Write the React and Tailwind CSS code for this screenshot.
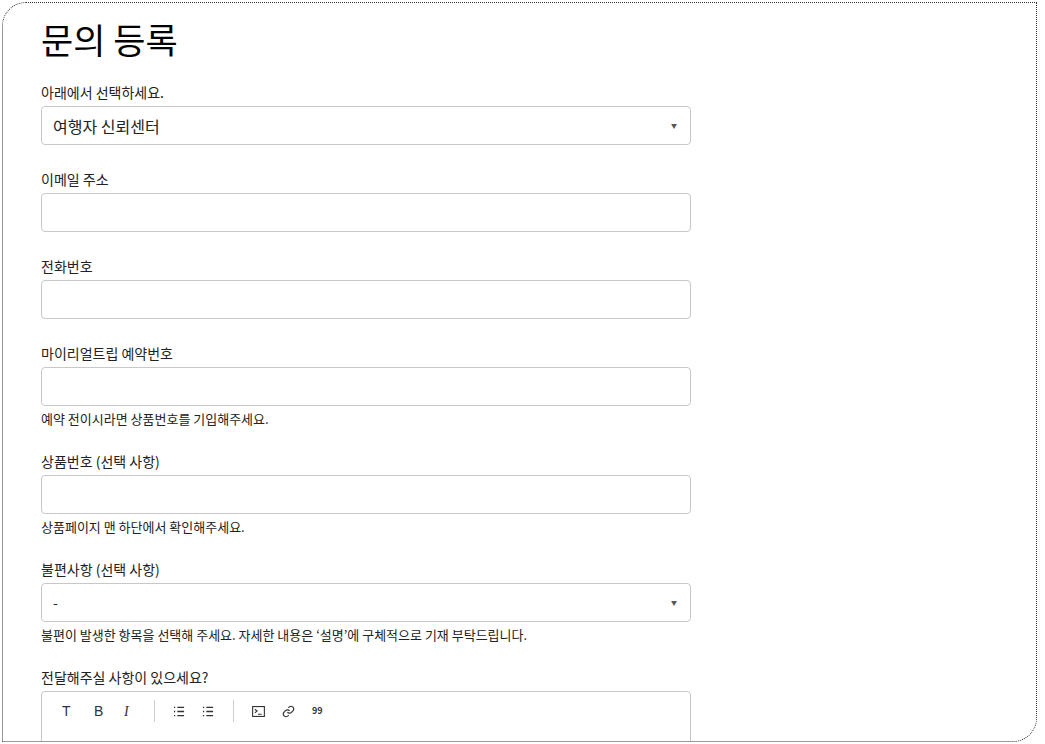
const font = { fontFamily: '"Noto Sans CJK KR", "Liberation Sans", sans-serif' }

function Label({ children }) {
  return <div className="text-[14px] leading-5 text-[#222] mb-[4px]">{children}</div>
}

function Input() {
  return <div className="h-[39px] w-[650px] rounded border border-[#c8c8c8] bg-white" />
}

function Select({ value, big }) {
  return (
    <div className="h-[39px] w-[650px] rounded border border-[#c8c8c8] bg-white flex items-center justify-between pl-[11px] pr-[13px]">
      <span className={big ? 'text-[16px] text-[#222]' : 'text-[14px] text-[#222]'}>{value}</span>
      <span className="text-[6px] text-[#555]">▼</span>
    </div>
  )
}

function Help({ children }) {
  return <div className="text-[13px] leading-4 text-[#222] mt-[5px]">{children}</div>
}

function Field({ label, children, help }) {
  return (
    <div className="mb-[24px]">
      <Label>{label}</Label>
      {children}
      {help && <Help>{help}</Help>}
    </div>
  )
}

export default function App() {
  return (
    <div className="w-[1045px] h-[744px] bg-white p-[2px] overflow-hidden" style={font}>
      <div className="w-[1035px] h-[740px] border border-dotted border-[#333] rounded-tl-[24px] rounded-br-[24px] pl-[38px] pt-[14px] overflow-hidden">
        <h1 className="text-[35px] leading-[44px] text-black mb-[21px]">문의 등록</h1>
        <Field label="아래에서 선택하세요."><Select value="여행자 신뢰센터" big /></Field>
        <Field label="이메일 주소"><Input /></Field>
        <Field label="전화번호"><Input /></Field>
        <Field label="마이리얼트립 예약번호" help="예약 전이시라면 상품번호를 기입해주세요."><Input /></Field>
        <Field label="상품번호 (선택 사항)" help="상품페이지 맨 하단에서 확인해주세요."><Input /></Field>
        <Field label="불편사항 (선택 사항)" help="불편이 발생한 항목을 선택해 주세요. 자세한 내용은 ‘설명’에 구체적으로 기재 부탁드립니다."><Select value="-" /></Field>
        <div>
          <Label>전달해주실 사항이 있으세요?</Label>
          <div className="w-[650px] h-[60px] rounded border border-[#c8c8c8] flex items-center pl-[20px] pb-[20px] text-[#333]">
            <span className="w-[32px] text-[14px]" style={{ fontFamily: '"Liberation Sans", sans-serif' }}>T</span>
            <span className="w-[30px] text-[14px]" style={{ fontFamily: '"Liberation Sans", sans-serif' }}>B</span>
            <span className="w-[20px] text-[14px] italic" style={{ fontFamily: '"Liberation Serif", serif' }}>I</span>
            <span className="w-px h-[22px] bg-[#ccc] mx-[10px]" />
            <svg className="mx-[8px]" width="12" height="11" viewBox="0 0 14 13" fill="none" stroke="#333" strokeWidth="1.5">
              <path d="M1 1.5h1.5M1 6.5h1.5M1 11.5h1.5M5 1.5h8M5 6.5h8M5 11.5h8" />
            </svg>
            <svg className="mx-[9px]" width="12" height="11" viewBox="0 0 14 13" fill="none" stroke="#333" strokeWidth="1.5">
              <path d="M1 1.5h1.5M1 6.5h1.5M1 11.5h1.5M5 1.5h8M5 6.5h8M5 11.5h8" />
            </svg>
            <span className="w-px h-[22px] bg-[#ccc] mx-[10px]" />
            <svg className="mx-[8px]" width="13" height="11" viewBox="0 0 14 12" fill="none" stroke="#333" strokeWidth="1.2">
              <rect x="0.6" y="0.6" width="12.8" height="10.8" /><path d="M3 3.5l2.5 2-2.5 2M6.5 9h4" />
            </svg>
            <svg className="mx-[9px]" width="13" height="13" viewBox="0 0 24 24" fill="none" stroke="#333" strokeWidth="2.2">
              <path d="M10 13a5 5 0 0 0 7.5.5l3-3a5 5 0 0 0-7-7l-1.7 1.7" /><path d="M14 11a5 5 0 0 0-7.5-.5l-3 3a5 5 0 0 0 7 7l1.7-1.7" />
            </svg>
            <span className="mx-[8px] text-[9px] font-bold">99</span>
          </div>
        </div>
      </div>
    </div>
  )
}
